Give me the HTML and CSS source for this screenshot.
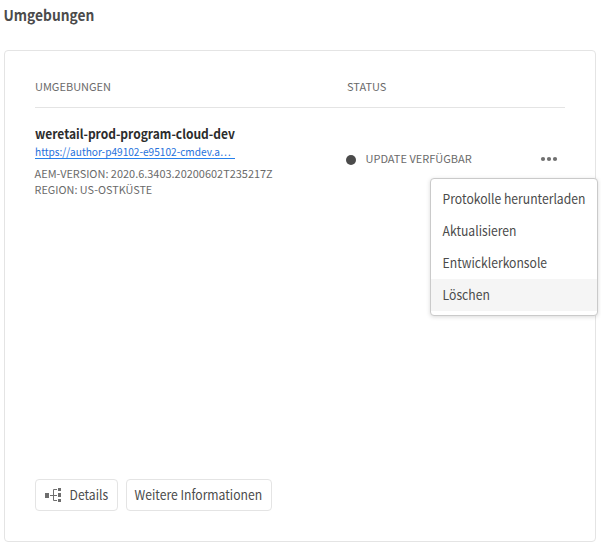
FILE: index.html
```html
<!DOCTYPE html>
<html lang="de">
<head>
<meta charset="utf-8">
<title>Umgebungen</title>
<link rel="stylesheet" href="styles.css">
</head>
<body>
<h1 class="title"><span>Umgebungen</span></h1>
<main class="card">
  <div class="head">
    <span class="h-env">Umgebungen</span>
    <span class="h-status">Status</span>
  </div>
  <div class="row">
    <div class="env">
      <h2 class="name"><span>weretail-prod-program-cloud-dev</span></h2>
      <a class="url" href="#"><span>https://author-p49102-e95102-cmdev.a…</span></a>
      <p class="meta version"><span>AEM-Version: 2020.6.3403.20200602T235217Z</span></p>
      <p class="meta region"><span>Region: US-Ostküste</span></p>
    </div>
    <div class="status">
      <i class="dot"></i>
      <span class="status-text">Update verfügbar</span>
      <button class="more" aria-label="Mehr">
        <svg width="18" height="6" viewBox="0 0 18 6"><circle cx="3" cy="3" r="2.1"/><circle cx="9" cy="3" r="2.1"/><circle cx="15" cy="3" r="2.1"/></svg>
      </button>
      <ul class="menu">
        <li><span>Protokolle herunterladen</span></li>
        <li><span>Aktualisieren</span></li>
        <li><span>Entwicklerkonsole</span></li>
        <li class="active"><span>Löschen</span></li>
      </ul>
    </div>
  </div>
  <footer class="actions">
    <button class="btn details">
      <svg width="18" height="14" viewBox="0 0 18 14"><path d="M0 5h4v5H0zM13 0h3v3h-3zM13 5h3v4h-3zM13 11h3v3h-3z"/><path class="line" d="M5 7.5h7M12 1.5H8.5v11H12"/></svg>
      <span>Details</span>
    </button>
    <button class="btn info"><span>Weitere Informationen</span></button>
  </footer>
</main>
</body>
</html>
```
FILE: styles.css
```css
* { box-sizing: border-box; margin: 0; padding: 0; }
body {
  width: 601px;
  height: 545px;
  overflow: hidden;
  background: #fff;
  color: #4b4b4b;
  font-family: "Noto Sans CJK SC", "Open Sans", sans-serif;
  font-size: 14px;
  white-space: nowrap;
}
button { font: inherit; color: inherit; background: none; border: 0; }
/* condensed labels */
.title span, .name span, .url span, .meta span, .menu span, .btn span {
  display: inline-block;
  transform-origin: 0 50%;
}
.title span { transform: translateX(-.5px) scaleX(.918); }
.name span { transform: scaleX(.923); }
.url span { transform: scaleX(.92); }
.meta span { transform: translateX(-.4px) scaleX(.994); }
.region span { transform: translateX(-.4px) scaleX(.985); }
.menu span, .btn span { transform: translateX(-.4px) scaleX(.9); }
.title {
  height: 50px;
  padding: 4px 0 0 4px;
  font-size: 15px;
  line-height: 22px;
  font-weight: 700;
}
.card {
  display: flex;
  flex-direction: column;
  width: 592px;
  height: 492px;
  margin-left: 4px;
  padding: 0 30px 30px;
  border: 1px solid #e4e4e4;
  border-radius: 4px;
}
.head {
  display: grid;
  grid-template-columns: 312px 1fr;
  height: 57px;
  padding-top: 26px;
  border-bottom: 1px solid #e4e4e4;
  color: #6a6a6a;
  font-size: 11px;
  line-height: 18px;
  text-transform: uppercase;
}
.row { display: grid; grid-template-columns: 311px 1fr; flex: 1; }
.env { padding-top: 16px; }
.name { height: 19px; color: #2c2c2c; font-size: 13px; line-height: 19px; font-weight: 700; }
.url {
  display: block;
  width: 200px;
  height: 16px;
  border-bottom: 1px solid #2680eb;
  color: #2672dc;
  font-size: 11px;
  line-height: 16px;
  text-decoration: none;
}
.meta { color: #6a6a6a; font-size: 11px; line-height: 16px; text-transform: uppercase; }
.version { margin-top: 6px; }
.status {
  position: relative;
  display: flex;
  align-items: center;
  height: 20px;
  margin-top: 41px;
  color: #6a6a6a;
  font-size: 11px;
  text-transform: uppercase;
}
.status-text { margin-bottom: 2px; }
.dot { width: 10px; height: 10px; margin: 2px 9.5px 0 0; border-radius: 50%; background: #4b4b4b; }
.more { display: flex; margin-left: auto; margin-right: 7px; fill: #707070; }
.menu {
  position: absolute;
  top: 29px;
  left: 84px;
  width: 168px;
  height: 138px;
  padding: 4px 0;
  border: 1px solid #cacaca;
  border-radius: 4px;
  background: #fff;
  box-shadow: 0 1px 4px rgba(0, 0, 0, .15);
  color: #4b4b4b;
  font-size: 13.5px;
  list-style: none;
  text-transform: none;
}
.menu li { height: 32px; padding-left: 12px; line-height: 30px; }
.menu .active { background: #f5f5f5; }
.actions { display: flex; gap: 8px; }
.btn {
  display: flex;
  align-items: center;
  height: 32px;
  border: 1px solid #e4e4e4;
  border-radius: 4px;
  font-size: 13.5px;
}
.btn span { margin-bottom: 2px; }
.details { width: 83px; padding-left: 9px; gap: 7px; }
.details svg { fill: #6e6e6e; }
.details .line { fill: none; stroke: #6e6e6e; }
.info { width: 146px; padding-left: 8px; }
```
